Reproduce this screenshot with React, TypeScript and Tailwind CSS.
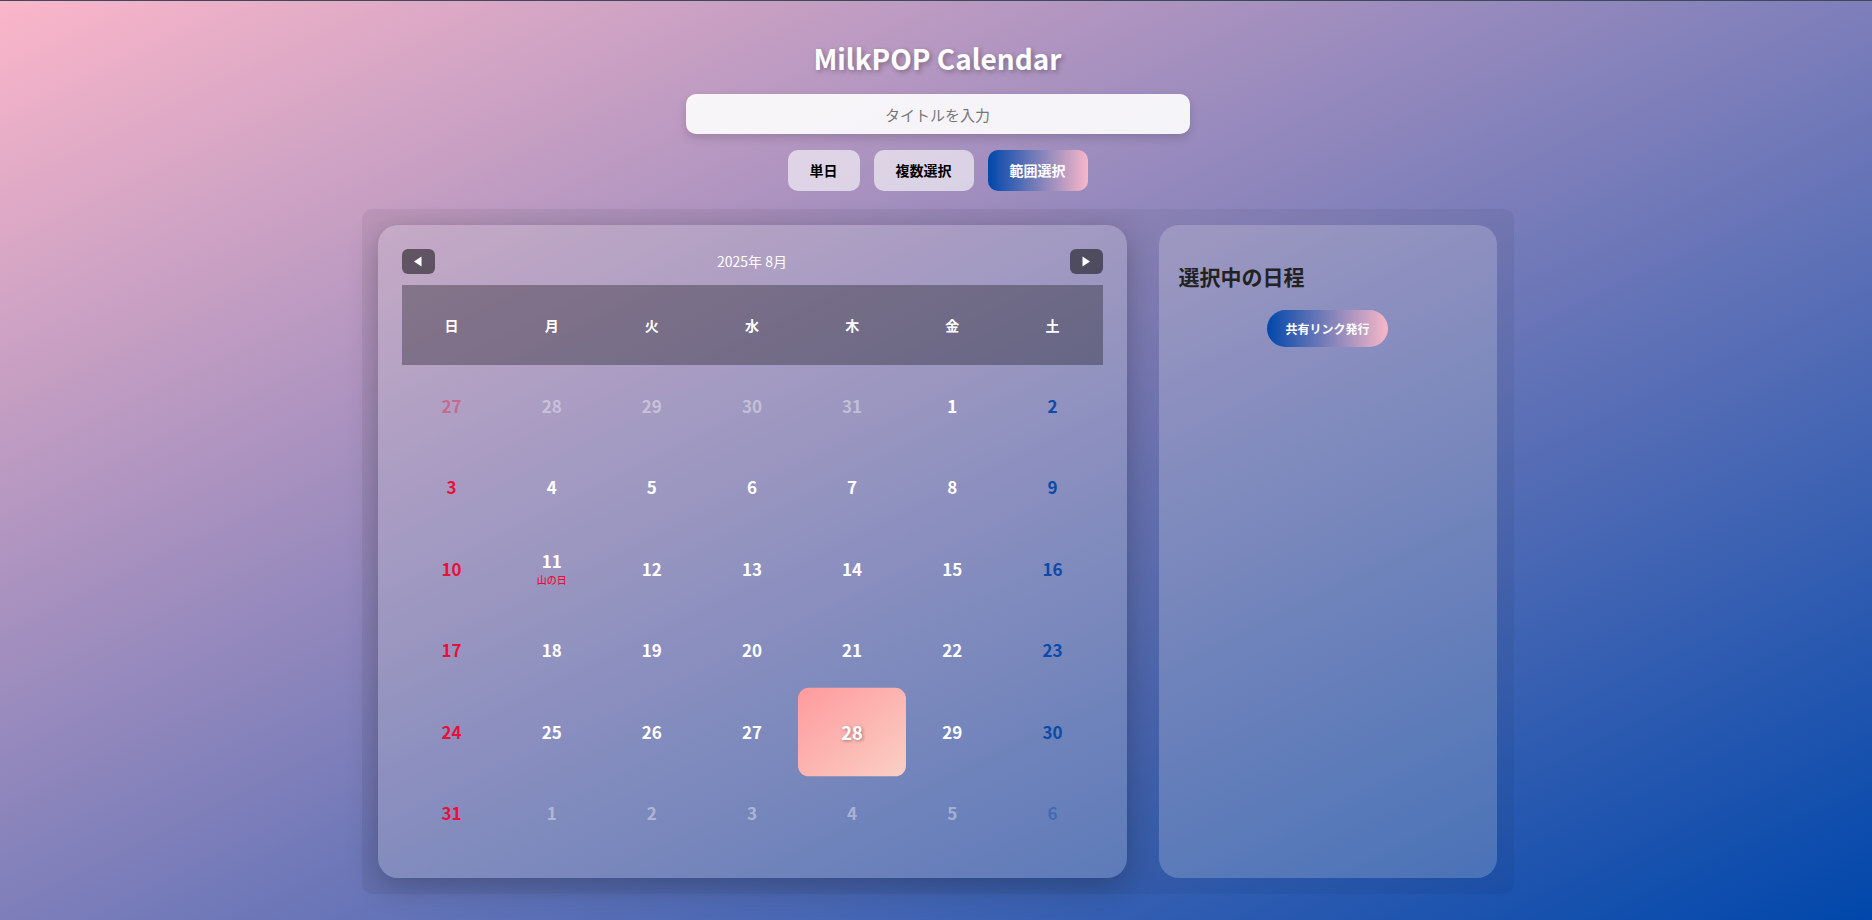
import { useState } from "react";

const weekDays = ["日", "月", "火", "水", "木", "金", "土"];

interface DayCell {
  day: number;
  current: boolean;
  holiday?: string;
}

const buildDays = (): DayCell[] => {
  const days: DayCell[] = [];
  [27, 28, 29, 30, 31].forEach((d) => days.push({ day: d, current: false }));
  for (let d = 1; d <= 31; d++) {
    days.push({ day: d, current: true, holiday: d === 11 ? "山の日" : undefined });
  }
  [1, 2, 3, 4, 5, 6].forEach((d) => days.push({ day: d, current: false }));
  return days;
};

const Triangle = ({ dir }: { dir: "left" | "right" }) => (
  <svg width="10" height="11" viewBox="0 0 10 11">
    {dir === "left" ? (
      <path d="M8.5 0.5 L8.5 10.5 L1 5.5 Z" fill="white" />
    ) : (
      <path d="M1.5 0.5 L1.5 10.5 L9 5.5 Z" fill="white" />
    )}
  </svg>
);

const App = () => {
  const [mode, setMode] = useState<string>("範囲選択");
  const [selected, setSelected] = useState<number>(28);
  const days = buildDays();

  const dayColor = (i: number, cell: DayCell) => {
    const col = i % 7;
    if (col === 0) return cell.current ? "text-[#e8103a]" : "text-[#e8103a]/40";
    if (col === 6) return cell.current ? "text-[#0a4aa8]" : "text-[#0a4aa8]/40";
    return cell.current ? "text-white" : "text-white/40";
  };

  return (
    <div
      className="min-h-screen w-full border-t border-[#3d4a5c] bg-[linear-gradient(to_bottom_right,#fbb6c9,#0047ab)] flex flex-col items-center pt-[37px] pl-[3px]"
      style={{ fontFamily: '"Noto Sans CJK JP", "Noto Sans", sans-serif' }}
    >
      <h1 className="text-[28px] leading-[40px] font-bold text-white [text-shadow:2px_2px_5px_rgba(0,0,0,0.3)]">
        MilkPOP Calendar
      </h1>

      <input
        type="text"
        placeholder="タイトルを入力"
        className="mt-[16px] w-[504px] h-[40px] rounded-[10px] bg-white/90 text-center text-[15px] text-[#333] placeholder:text-[#777] outline-none shadow-[0_4px_10px_rgba(0,0,0,0.15)]"
      />

      <div className="flex gap-[14px] mt-[16px]">
        {["単日", "複数選択", "範囲選択"].map((m) => (
          <button
            key={m}
            onClick={() => setMode(m)}
            className={
              mode === m
                ? "h-[41px] px-[22px] rounded-[10px] text-[14px] font-bold text-white bg-[linear-gradient(to_right,#0047ab,#f8b7c8)]"
                : "h-[41px] px-[22px] rounded-[10px] text-[14px] font-bold text-black bg-white/60"
            }
          >
            {m}
          </button>
        ))}
      </div>

      <div className="mt-[18px] w-[1152px] rounded-[10px] bg-black/5 p-4 flex gap-8">
        {/* calendar */}
        <section className="w-[749px] rounded-[20px] bg-white/20 p-6 shadow-[0_8px_30px_rgba(0,0,0,0.25)]">
          <div className="flex items-center justify-between h-[25px]">
            <button className="w-[33px] h-[25px] rounded-[6px] bg-black/50 flex items-center justify-center">
              <Triangle dir="left" />
            </button>
            <p className="text-white text-[14px]">2025年 8月</p>
            <button className="w-[33px] h-[25px] rounded-[6px] bg-black/50 flex items-center justify-center">
              <Triangle dir="right" />
            </button>
          </div>

          <div className="mt-[11px] grid grid-cols-7 h-[80px] bg-black/30 items-center">
            {weekDays.map((w) => (
              <div key={w} className="text-center text-white text-[14px] font-bold">
                {w}
              </div>
            ))}
          </div>

          <div className="grid grid-cols-7">
            {days.map((cell, i) => {
              const isSel = cell.current && cell.day === selected;
              return (
                <div
                  key={i}
                  onClick={() => cell.current && setSelected(cell.day)}
                  className={
                    isSel
                      ? "h-[81.5px] flex flex-col items-center justify-center rounded-[10px] scale-[1.08] bg-[linear-gradient(to_bottom_right,#ff9a9e,#fad0c4)] text-white text-[17px] font-bold [text-shadow:1px_1px_3px_rgba(0,0,0,0.35)] cursor-pointer"
                      : "h-[81.5px] flex flex-col items-center justify-center text-[17px] font-bold cursor-pointer " +
                        dayColor(i, cell)
                  }
                >
                  <span className="leading-[20px]">{cell.day}</span>
                  {cell.holiday && (
                    <span className="mt-[3px] text-[10px] leading-[12px] font-medium text-[#e8103a]">
                      {cell.holiday}
                    </span>
                  )}
                </div>
              );
            })}
          </div>
        </section>

        {/* selected list */}
        <aside className="w-[338px] rounded-[20px] bg-white/20 p-5 flex flex-col">
          <h2 className="mt-[17px] text-[21px] leading-[28px] font-bold text-[#222]">選択中の日程</h2>
          <div className="flex justify-center mt-[20px]">
            <button className="h-[37px] px-[18px] rounded-full text-[12px] font-bold text-white bg-[linear-gradient(to_right,#0047ab,#f8b7c8)]">
              共有リンク発行
            </button>
          </div>
        </aside>
      </div>
    </div>
  );
};

export default App;
